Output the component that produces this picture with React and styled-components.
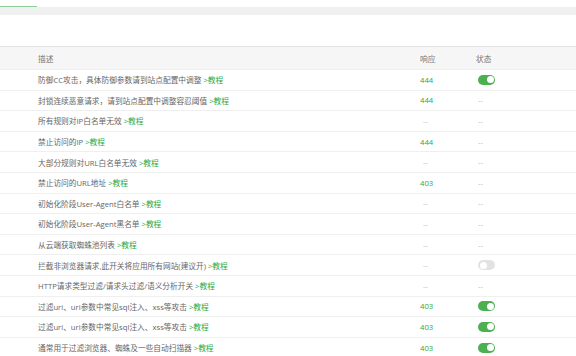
import React from 'react'
import styled, { createGlobalStyle } from 'styled-components';

const GlobalStyle = createGlobalStyle`
  html, body {
    margin: 0;
    padding: 0;
    background: #fff;
  }
  body {
    font-family: "Open Sans", "Noto Sans CJK SC", sans-serif;
    font-size: 7.7px;
    color: #666;
    overflow: hidden;
  }
`;

const rules = [
  { desc: '防御CC攻击，具体防御参数请到站点配置中调整', code: '444', status: 'on' },
  { desc: '封锁连续恶意请求，请到站点配置中调整容忍阈值', code: '444', status: null },
  { desc: '所有规则对IP白名单无效', code: null, status: null },
  { desc: '禁止访问的IP', code: '444', status: null },
  { desc: '大部分规则对URL白名单无效', code: null, status: null },
  { desc: '禁止访问的URL地址', code: '403', status: null },
  { desc: '初始化阶段User-Agent白名单', code: null, status: null },
  { desc: '初始化阶段User-Agent黑名单', code: null, status: null },
  { desc: '从云端获取蜘蛛池列表', code: null, status: null },
  { desc: '拦截非浏览器请求,此开关将应用所有网站(建议开)', code: null, status: 'off' },
  { desc: 'HTTP请求类型过滤/请求头过滤/语义分析开关', code: null, status: null },
  { desc: '过滤uri、uri参数中常见sql注入、xss等攻击', code: '403', status: 'on' },
  { desc: '过滤uri、uri参数中常见sql注入、xss等攻击', code: '403', status: 'on' },
  { desc: '通常用于过滤浏览器、蜘蛛及一些自动扫描器', code: '403', status: 'on' },
];

const Page = styled.div`
  width: 576px;
`;

const TabBar = styled.div`
  height: 7px;
  display: flex;
  align-items: flex-end;
`;

const TabIndicator = styled.div`
  width: 37px;
  height: 1px;
  background: #8fd19c;
`;

const Band = styled.div`
  height: 8px;
  background: #f0f0f0;
`;

const Toolbar = styled.div`
  height: 31px;
`;

const Table = styled.div`
  border-top: 1px solid #e4e4e4;
`;

const Row = styled.div`
  display: grid;
  grid-template-columns: 420px 56px 1fr;
  align-items: center;
  height: ${p => (p.$head ? '23px' : '20.6px')};
  box-sizing: border-box;
  background: ${p => (p.$head ? '#f6f6f6' : '#fff')};
  border-bottom: 1px solid #efefef;
`;

const Desc = styled.div`
  padding-left: 38px;
  white-space: nowrap;
  color: ${p => (p.$head ? '#777' : '#666')};
`;

const Link = styled.span`
  color: #2aa843;
  margin-left: 2px;
`;

const Code = styled.div`
  color: ${p => (p.$empty ? '#bbb' : '#2aa843')};
  padding-left: ${p => (p.$empty ? '3px' : '0')};
`;

const Status = styled.div`
  color: #bbb;
  padding-left: 2px;
  display: flex;
  align-items: center;
`;

const HeadCell = styled.div`
  color: #777;
`;

const Switch = styled.div`
  position: relative;
  width: 17px;
  height: 10px;
  border-radius: 5px;
  background: ${p => (p.$on ? '#4caf50' : '#e2e2e2')};

  &::after {
    content: '';
    position: absolute;
    top: 1.5px;
    left: ${p => (p.$on ? '8.5px' : '1.5px')};
    width: 7px;
    height: 7px;
    border-radius: 50%;
    background: #fff;
  }
`;

const App = () => {
  return (
    <Page>
      <GlobalStyle />
      <TabBar>
        <TabIndicator />
      </TabBar>
      <Band />
      <Toolbar />
      <Table>
        <Row $head>
          <Desc $head>描述</Desc>
          <HeadCell>响应</HeadCell>
          <HeadCell>状态</HeadCell>
        </Row>
        {rules.map((rule, index) => (
          <Row key={index}>
            <Desc>
              {rule.desc}
              <Link>&gt;教程</Link>
            </Desc>
            <Code $empty={!rule.code}>{rule.code || '--'}</Code>
            <Status>
              {rule.status ? <Switch $on={rule.status === 'on'} /> : '--'}
            </Status>
          </Row>
        ))}
      </Table>
    </Page>
  );
};

export default App;
